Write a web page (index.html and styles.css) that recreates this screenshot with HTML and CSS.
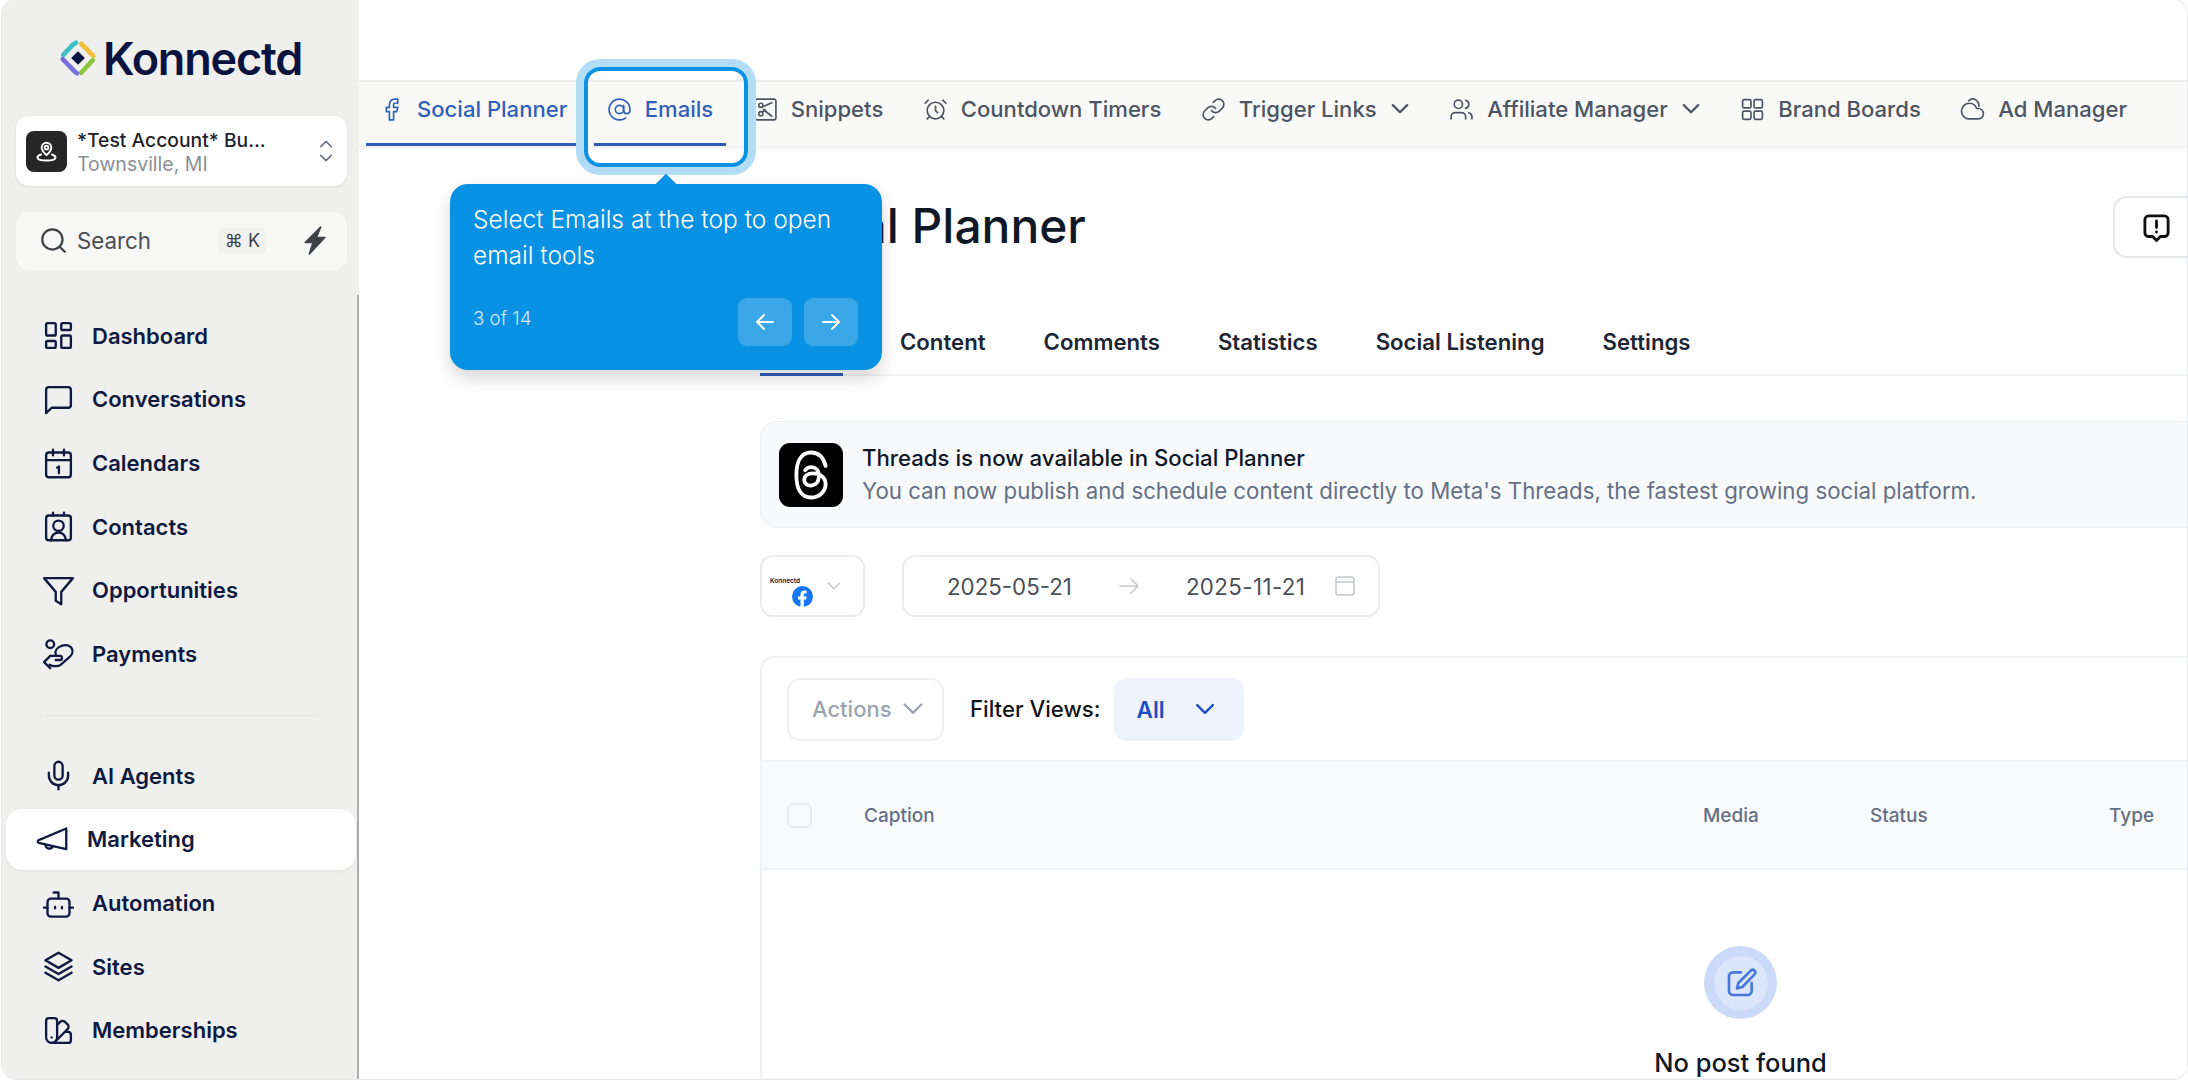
FILE: index.html
```html
<!DOCTYPE html>
<html lang="en">
<head>
    <meta charset="UTF-8">
    <title>Social Planner</title>
    <link rel="stylesheet" href="styles.css">
</head>
<body>
<div class="app">
    <aside class="sidebar">
        <div class="logo">
            <svg class="logo-mark" viewBox="0 0 36 36" fill="none" stroke-width="4.4" stroke-linecap="round" stroke-linejoin="round">
                <path d="M4 15 13 5.5 16 3.5" stroke="#3cc0c4"/>
                <path d="M21 4.5 32.5 16" stroke="#f3bd3f"/>
                <path d="M32 20 21 32" stroke="#8bc63f"/>
                <path d="M3.5 19 14.5 30.5 17 32.5" stroke="#7a6fd8"/>
                <path d="M18 11.5 24.5 18 18 24.5 11.5 18Z" fill="#0b1440" stroke="none"/>
            </svg>
            <span class="logo-text">Konnectd</span>
        </div>

        <div class="account">
            <div class="account-pic">
                <svg viewBox="0 0 24 24" fill="none" stroke="#fff" stroke-width="1.6" stroke-linecap="round" stroke-linejoin="round">
                    <path d="M12 15c-2.5-2.4-4-4.2-4-6.2a4 4 0 0 1 8 0c0 2-1.500 3.800-4 6.200Z"/>
                    <circle cx="12" cy="8.800" r="1.500"/>
                    <path d="M7.500 14.500C5.500 15.200 4.500 16 4.500 17c0 1.600 3.400 2.500 7.500 2.500s7.500-.9 7.500-2.500c0-1-1-1.800-3-2.500"/>
                </svg>
            </div>
            <div class="account-text">
                <div class="account-name">*Test Account* Bu...</div>
                <div class="account-place">Townsville, MI</div>
            </div>
            <svg class="updown" viewBox="0 0 16 28" fill="none" stroke="#667085" stroke-width="1.700" stroke-linecap="round" stroke-linejoin="round">
                <path d="M2 9l6-6 6 6"/>
                <path d="M2 19l6 6 6-6"/>
            </svg>
        </div>

        <div class="search">
            <svg class="search-icon" viewBox="0 0 24 24" fill="none" stroke="#3f4247" stroke-width="2" stroke-linecap="round">
                <circle cx="11" cy="11" r="9"/>
                <path d="M18 18l4 4"/>
            </svg>
            <span class="search-label">Search</span>
            <span class="kbd">⌘ K</span>
            <svg class="bolt" viewBox="0 0 24 30" fill="#3f4247" stroke="#3f4247" stroke-width="1.500" stroke-linejoin="round"><path d="M18 2 3 17h7.500L7 28l15-16h-8z"/></svg>
        </div>

        <nav class="nav">
            <a class="nav-item">
                <svg class="nav-icon" viewBox="0 0 24 24"><rect x="3" y="3" width="7" height="9" rx="1"/><rect x="14" y="3" width="7" height="5" rx="1"/><rect x="14" y="12" width="7" height="9" rx="1"/><rect x="3" y="16" width="7" height="5" rx="1"/></svg>
                Dashboard
            </a>
            <a class="nav-item">
                <svg class="nav-icon" viewBox="0 0 24 24"><path d="M3 22V5a2 2 0 0 1 2-2h14a2 2 0 0 1 2 2v11a2 2 0 0 1-2 2H7z"/></svg>
                Conversations
            </a>
            <a class="nav-item">
                <svg class="nav-icon" viewBox="0 0 24 24"><rect x="3" y="4" width="18" height="18" rx="2"/><path d="M3 9.500h18M8 2v4M16 2v4M11 15l1.300-.8V19"/></svg>
                Calendars
            </a>
            <a class="nav-item">
                <svg class="nav-icon" viewBox="0 0 24 24"><rect x="3" y="4" width="18" height="18" rx="2"/><path d="M8 2v2M16 2v2M6.500 22c.5-3.500 2.700-5.500 5.500-5.500s5 2 5.500 5.500"/><circle cx="12" cy="11.500" r="3.800"/></svg>
                Contacts
            </a>
            <a class="nav-item">
                <svg class="nav-icon" viewBox="0 0 24 24"><path d="M1.500 3h21l-8.500 10v9l-4-2.500V13z"/></svg>
                Opportunities
            </a>
            <a class="nav-item">
                <svg class="nav-icon" viewBox="0 0 24 24"><circle cx="6" cy="4.500" r="2.800"/><path d="M10 12c-.8-2.500.8-5 4-6.200 3-1 6-.5 7.500 1.500 1.500 2.200.5 5-2 7l-6 5.200c-1 .8-2 1-3 1H8l-2.500-1"/><path d="M6 13l-4.500 4.500L6 22"/><path d="M6 13h7a1.500 1.500 0 0 1 0 3h-3"/></svg>
                Payments
            </a>
        </nav>

        <div class="nav-divider"></div>

        <nav class="nav">
            <a class="nav-item">
                <svg class="nav-icon" viewBox="0 0 24 24"><path d="M12 2a3 3 0 0 0-3 3v7a3 3 0 0 0 6 0V5a3 3 0 0 0-3-3Z"/><path d="M19 10v2a7 7 0 0 1-14 0v-2M12 19v3"/></svg>
                AI Agents
            </a>
            <a class="nav-item nav-item-active">
                <svg class="nav-icon" viewBox="0 0 24 24"><path d="M22 4v15L2 14.500c-1-.3-1-1.700 0-2z"/><path d="M7 16c0 2.500 3 3.500 5 1.500"/></svg>
                Marketing
            </a>
            <a class="nav-item">
                <svg class="nav-icon" viewBox="0 0 24 24"><rect x="4" y="8.500" width="16" height="13" rx="2.500"/><path d="M12 8.500V4H8.500M1.500 15H4M20 15h2.500M9.500 14.500v1M14.500 14.500v1"/></svg>
                Automation
            </a>
            <a class="nav-item">
                <svg class="nav-icon" viewBox="0 0 24 24"><path d="M12 2 2.500 7.500 12 13l9.500-5.500z"/><path d="M2.500 12 12 17.500 21.500 12"/><path d="M2.500 16.500 12 22l9.500-5.500"/></svg>
                Sites
            </a>
            <a class="nav-item">
                <svg class="nav-icon" viewBox="0 0 24 24"><path d="M11 17a4 4 0 0 1-8 0V5a2 2 0 0 1 2-2h4a2 2 0 0 1 2 2Z"/><path d="M16.700 13H19a2 2 0 0 1 2 2v4a2 2 0 0 1-2 2H7"/><path d="M7 17h.01"/><path d="m11 8 2.300-2.300a2.400 2.400 0 0 1 3.404.004L18.600 7.600a2.400 2.400 0 0 1 .026 3.434L9.900 19.800"/></svg>
                Memberships
            </a>
            <a class="nav-item">
                <svg class="nav-icon" viewBox="0 0 24 24"><rect x="4" y="3" width="16" height="18" rx="2"/></svg>
            </a>
        </nav>
    </aside>

    <main class="main">
        <div class="topbar"></div>

        <div class="tabs">
            <a class="tab tab-active">
                <svg class="tab-icon" viewBox="0 0 24 24"><path d="M18 2h-3a5 5 0 0 0-5 5v3H7v4h3v8h4v-8h3l1-4h-4V7a1 1 0 0 1 1-1h3z"/></svg>
                Social Planner
            </a>
            <a class="tab tab-active">
                <svg class="tab-icon" viewBox="0 0 24 24"><circle cx="12" cy="12" r="4"/><path d="M16 8v5a3 3 0 0 0 6 0v-1a10 10 0 1 0-4 8"/></svg>
                Emails
            </a>
            <a class="tab">
                <svg class="tab-icon" viewBox="0 0 24 24"><rect x="2" y="2" width="20" height="20" rx="2"/><circle cx="7.500" cy="8" r="2"/><circle cx="7.500" cy="16" r="2"/><path d="M9 9.500l9-4M10 12l8 6.500M9 14.500l3-2"/></svg>
                Snippets
            </a>
            <a class="tab">
                <svg class="tab-icon" viewBox="0 0 24 24"><circle cx="12" cy="13" r="8"/><path d="M12 9v4l2 2M5 3 2 6M22 6l-3-3M6.380 18.700 4 21M17.640 18.670 20 21"/></svg>
                Countdown Timers
            </a>
            <a class="tab">
                <svg class="tab-icon" viewBox="0 0 24 24"><path d="M10 13a5 5 0 0 0 7.540.54l3-3a5 5 0 0 0-7.070-7.070l-1.720 1.710"/><path d="M14 11a5 5 0 0 0-7.540-.54l-3 3a5 5 0 0 0 7.070 7.070l1.710-1.710"/></svg>
                Trigger Links
                <svg class="tab-caret" viewBox="0 0 18 18"><path d="M2.500 5.500 9 12l6.500-6.500"/></svg>
            </a>
            <a class="tab">
                <svg class="tab-icon" viewBox="0 0 24 24"><path d="M16 21v-2a4 4 0 0 0-4-4H6a4 4 0 0 0-4 4v2"/><circle cx="9" cy="7" r="4"/><path d="M22 21v-2a4 4 0 0 0-3-3.870M16 3.130a4 4 0 0 1 0 7.750"/></svg>
                Affiliate Manager
                <svg class="tab-caret" viewBox="0 0 18 18"><path d="M2.500 5.500 9 12l6.500-6.500"/></svg>
            </a>
            <a class="tab">
                <svg class="tab-icon" viewBox="0 0 24 24"><rect x="2.500" y="2.500" width="8" height="8" rx="1.500"/><rect x="13.500" y="2.500" width="8" height="8" rx="1.500"/><rect x="2.500" y="13.500" width="8" height="8" rx="1.500"/><rect x="13.500" y="13.500" width="8" height="8" rx="1.500"/></svg>
                Brand Boards
            </a>
            <a class="tab">
                <svg class="tab-icon" viewBox="0 0 24 24"><path d="M17.500 21H9a7.500 7.500 0 0 1-6-12c1.500-2 3.500-3 6-3a7.500 7.500 0 0 1 7 5h1.500a5 5 0 0 1 0 10Z"/><path d="M8.500 3.500c2-1.800 5-2 7-.5 2 1.500 3 3.800 2.500 6"/></svg>
                Ad Manager
            </a>
        </div>

        <div class="content">
            <div class="page-head">
                <h1 class="page-title">Social Planner</h1>
                <button class="feedback">
                    <svg viewBox="0 0 24 24" fill="none" stroke="#111" stroke-width="2.200" stroke-linecap="round" stroke-linejoin="round"><path d="M6 3h12a3 3 0 0 1 3 3v10a3 3 0 0 1-3 3h-3l-3 3-3-3H6a3 3 0 0 1-3-3V6a3 3 0 0 1 3-3Z"/><path d="M12 7v5M12 15.500v.01"/></svg>
                </button>
            </div>

            <div class="subtabs">
                <a class="subtab subtab-active">Planner</a>
                <a class="subtab">Content</a>
                <a class="subtab">Comments</a>
                <a class="subtab">Statistics</a>
                <a class="subtab">Social Listening</a>
                <a class="subtab">Settings</a>
            </div>

            <div class="banner">
                <div class="threads-pic">
                    <svg viewBox="0 0 24 24" fill="none" stroke="#fff" stroke-width="1.700" stroke-linecap="round"><path d="M18.500 8C17.500 4 15 2 12 2 7.500 2 5.500 6 5.500 12c0 6 2 10 6.500 10 4 0 6.500-3 6.500-6 0-3-2.500-4.700-5.700-4.700-2.300 0-3.800 1.200-3.800 2.900 0 1.600 1.400 2.600 3 2.500 2.300-.2 3.500-1.900 3.500-4.200 0-2.700-1.500-4-3.300-4-1.200 0-2.200.5-2.800 1.400"/></svg>
                </div>
                <div class="banner-body">
                    <div class="banner-title">Threads is now available in Social Planner</div>
                    <div class="banner-text">You can now publish and schedule content directly to Meta's Threads, the fastest growing social platform.</div>
                </div>
            </div>

            <div class="filters">
                <div class="page-picker">
                    <div class="page-logo">
                        <span class="page-logo-name">Konnectd</span>
                        <svg class="fb-badge" viewBox="0 0 20 20"><circle cx="10" cy="10" r="10" fill="#1877f2"/><path d="M13.500 12.800l.4-2.800h-2.700V8.300c0-.8.4-1.500 1.600-1.500H14V4.500s-1.100-.2-2.200-.2c-2.200 0-3.700 1.300-3.700 3.800V10H5.700v2.800h2.400V20h3.100v-7.200z" fill="#fff"/></svg>
                    </div>
                    <svg class="caret-soft" viewBox="0 0 18 18"><path d="M2.500 5.500 9 12l6.500-6.500"/></svg>
                </div>
                <div class="range">
                    <span class="range-from">2025-05-21</span>
                    <svg class="range-arrow" viewBox="0 0 20 20"><path d="M1 10h18M12 3l7 7-7 7"/></svg>
                    <span class="range-to">2025-11-21</span>
                    <svg class="range-cal" viewBox="0 0 20 20"><rect x="1" y="1" width="18" height="18" rx="2.500"/><path d="M1 6h18"/></svg>
                </div>
            </div>

            <div class="card">
                <div class="toolbar">
                    <button class="btn-actions">Actions
                        <svg class="caret-grey" viewBox="0 0 18 18"><path d="M1.500 5 9 12.500 16.500 5"/></svg>
                    </button>
                    <span class="filter-label">Filter Views:</span>
                    <button class="btn-view">All
                        <svg class="caret-blue" viewBox="0 0 18 18"><path d="M2 5.500 9 12.500l7-7"/></svg>
                    </button>
                </div>
                <div class="thead">
                    <span class="checkbox"></span>
                    <span class="th th-caption">Caption</span>
                    <span class="th th-media">Media</span>
                    <span class="th th-status">Status</span>
                    <span class="th">Type</span>
                </div>
                <div class="empty">
                    <div class="empty-ring">
                        <div class="empty-core">
                            <svg viewBox="0 0 24 24" fill="none" stroke="#4a78d8" stroke-width="2" stroke-linecap="round" stroke-linejoin="round"><path d="M12 4H6a3 3 0 0 0-3 3v11a3 3 0 0 0 3 3h11a3 3 0 0 0 3-3v-6"/><path d="M19.500 2.500a2 2 0 0 1 2.800 2.800L13 15l-4 1 1-4z"/></svg>
                        </div>
                    </div>
                    <div class="empty-text">No post found</div>
                </div>
            </div>
        </div>
    </main>

    <!-- guided tour overlay -->
    <div class="spotlight"></div>
    <div class="tour">
        <span class="tour-tip"></span>
        <p class="tour-text">Select Emails at the top to open email tools</p>
        <div class="tour-foot">
            <span class="tour-count">3 of 14</span>
            <div class="tour-btns">
                <button class="tour-btn"><svg viewBox="0 0 24 24"><path d="M20 12H4M11 5l-7 7 7 7"/></svg></button>
                <button class="tour-btn"><svg viewBox="0 0 24 24"><path d="M4 12h16M13 5l7 7-7 7"/></svg></button>
            </div>
        </div>
    </div>
</div>
</body>
</html>
```

FILE: styles.css
```css
* {
    box-sizing: border-box;
}

body {
    margin: 0;
    padding: 0 1px 1px 2px;
    height: 1080px;
    overflow: hidden;
    background: #fff;
    font-family: Inter, "Liberation Sans", sans-serif;
}

button {
    font-family: inherit;
}

.app {
    position: relative;
    display: flex;
    height: 1079px;
    overflow: hidden;
    border-radius: 14px;
    box-shadow: 0 0 0 1px #e7e8eb;
}

/* sidebar */
.sidebar {
    position: relative;
    flex: 0 0 357px;
    background: #efefee;
    overflow: hidden;
}

.sidebar::after {
    content: "";
    position: absolute;
    top: 295px;
    bottom: 0;
    right: 0;
    width: 2px;
    background: #adadad;
}

.logo {
    display: flex;
    align-items: center;
    gap: 6px;
    height: 116px;
    padding: 0 0 0 57px;
}

.logo-mark {
    width: 38px;
    height: 38px;
}

.logo-text {
    font-size: 45px;
    font-weight: 600;
    letter-spacing: -1.200px;
    color: #0b1440;
}

.account {
    display: flex;
    align-items: center;
    height: 70px;
    margin: 0 12px 0 14px;
    padding: 0 14px 0 10px;
    background: #fff;
    border-radius: 13px;
    box-shadow: 0 1px 3px rgba(0, 0, 0, 0.08);
}

.account-pic {
    flex: 0 0 41px;
    height: 41px;
    padding: 6px;
    margin-right: 10px;
    background: #262626;
    border-radius: 8px;
}

.account-text {
    flex: 1;
    padding-top: 2px;
}

.account-name {
    font-size: 19.300px;
    font-weight: 500;
    line-height: 24px;
    color: #1f2328;
}

.account-place {
    font-size: 19.500px;
    line-height: 24px;
    color: #8b8f96;
}

.updown {
    width: 14px;
    height: 26px;
}

.search {
    display: flex;
    align-items: center;
    height: 58px;
    margin: 26px 12px 34px 14px;
    padding: 0 20px 2px 24px;
    background: #f7f7f6;
    border-radius: 13px;
}

.search-icon {
    width: 27px;
    height: 27px;
}

.search-label {
    flex: 1;
    margin-left: 10px;
    font-size: 22.300px;
    color: #4a4d52;
}

.kbd {
    padding: 2px 6px;
    background: #f1f1f0;
    border-radius: 4px;
    font-size: 18px;
    color: #3f4247;
}

.bolt {
    width: 25px;
    height: 31px;
    margin-left: 36px;
}

.nav-item {
    display: flex;
    align-items: center;
    gap: 17px;
    height: 63.670px;
    padding-left: 40px;
    font-size: 22px;
    font-weight: 600;
    color: #101a40;
}

.nav-icon {
    width: 33px;
    height: 33px;
    fill: none;
    stroke: #101a40;
    stroke-width: 1.700;
    stroke-linecap: round;
    stroke-linejoin: round;
}

.nav-item-active {
    gap: 18px;
    height: 61px;
    margin: 1px 3px 1.670px 4px;
    padding-left: 30px;
    background: #fff;
    border-radius: 16px;
    box-shadow: 0 1px 3px rgba(0, 0, 0, 0.06);
}

.nav-divider {
    height: 1px;
    margin: 29px 40px 28px 44px;
    background: #e6e6e5;
}

/* top tabs */
.main {
    flex: 1;
    min-width: 0;
    overflow: hidden;
    background: #fff;
}

.topbar {
    height: 80px;
}

.tabs {
    position: relative;
    display: flex;
    gap: 13.500px;
    height: 66px;
    padding-left: 7px;
    background: #f9f9f8;
    border-top: 2px solid #ececec;
    box-shadow: 0 2px 4px rgba(0, 0, 0, 0.08);
}

.tab {
    display: flex;
    align-items: center;
    gap: 13px;
    padding: 0 13px 7px;
    border-bottom: 3px solid transparent;
    font-size: 22.080px;
    font-weight: 500;
    color: #4d5562;
    white-space: nowrap;
}

.tab-icon {
    width: 25px;
    height: 25px;
    fill: none;
    stroke: currentColor;
    stroke-width: 1.600;
    stroke-linecap: round;
    stroke-linejoin: round;
}

.tab-caret {
    width: 20px;
    height: 20px;
    fill: none;
    stroke: currentColor;
    stroke-width: 2;
    stroke-linecap: round;
    stroke-linejoin: round;
}

.tab-active {
    color: #3160b8;
    border-bottom-color: #2f5ab5;
}

/* page content */
.content {
    width: 2362px;
    padding: 50px 0 0 401px;
}

.page-head {
    display: flex;
    justify-content: space-between;
    align-items: center;
    width: 1499px;
    height: 62px;
}

.page-title {
    margin: 0 0 2px;
    font-size: 47.900px;
    font-weight: 500;
    color: #101828;
}

.feedback {
    width: 146px;
    height: 62px;
    padding: 0 0 0 26px;
    text-align: left;
    background: #fff;
    border: 2px solid #e6e7ea;
    border-radius: 14px;
}

.feedback svg {
    display: block;
    width: 31px;
    height: 31px;
}

.subtabs {
    display: flex;
    height: 66px;
    margin-top: 52px;
    border-bottom: 2px solid #f1f2f4;
}

.subtab {
    display: flex;
    align-items: center;
    height: 66px;
    padding-bottom: 3px;
    margin-right: 58px;
    font-size: 22.200px;
    font-weight: 600;
    color: #1d2633;
    white-space: nowrap;
}

.subtab-active {
    width: 83px;
    border-bottom: 3px solid #2f5ab5;
    overflow: hidden;
    margin-right: 57px;
}

.banner {
    display: flex;
    align-items: center;
    gap: 19px;
    height: 107px;
    margin-top: 45px;
    padding: 0 0 0 18px;
    background: #f8f9fb;
    border: 1px solid #f0f1f4;
    border-radius: 16px;
}

.threads-pic {
    flex: 0 0 64px;
    height: 64px;
    padding: 5px;
    background: #000;
    border-radius: 11px;
}

.banner-body {
    margin-top: -2px;
}

.banner-title {
    font-size: 22.200px;
    font-weight: 500;
    color: #101828;
}

.banner-text {
    margin-top: 6px;
    font-size: 22.250px;
    color: #667085;
    white-space: nowrap;
}

.filters {
    display: flex;
    gap: 39px;
    height: 62px;
    margin-top: 27px;
}

.page-picker,
.range {
    display: flex;
    align-items: center;
    background: #fff;
    border: 2px solid #eaebee;
    border-radius: 13px;
}

.page-picker {
    width: 105px;
    padding-left: 8px;
}

.page-logo {
    display: flex;
    flex-direction: column;
    align-items: flex-end;
    width: 46px;
    margin-top: 11px;
}

.page-logo-name {
    align-self: flex-start;
    font-size: 6.500px;
    font-weight: 600;
    color: #0b1440;
}

.fb-badge {
    width: 21px;
    height: 21px;
    margin-top: 1px;
    margin-right: 3px;
}

.caret-soft {
    width: 16px;
    height: 16px;
    margin-left: 10px;
    fill: none;
    stroke: #c4c7cc;
    stroke-width: 1.600;
    stroke-linecap: round;
    stroke-linejoin: round;
}

.range {
    width: 478px;
    margin-left: -2px;
    padding-left: 43px;
    font-size: 22.300px;
    color: #4b4f57;
}

.range-arrow {
    width: 20px;
    height: 20px;
    margin: 0 47px;
    fill: none;
    stroke: #c4c7cc;
    stroke-width: 1.500;
    stroke-linecap: round;
    stroke-linejoin: round;
}

.range-to {
    letter-spacing: 0.400px;
}

.range-cal {
    width: 20px;
    height: 20px;
    margin-left: 30px;
    fill: none;
    stroke: #c4c7cc;
    stroke-width: 1.500;
}

.card {
    margin-top: 39px;
    background: #fff;
    border: 2px solid #f1f2f4;
    border-radius: 14px 14px 0 0;
}

.toolbar {
    display: flex;
    align-items: center;
    height: 102px;
    padding-left: 25px;
}

.btn-actions {
    display: flex;
    align-items: center;
    gap: 11px;
    width: 157px;
    height: 63px;
    padding: 0 0 0 23px;
    background: #fff;
    border: 2px solid #eef0f2;
    border-radius: 13px;
    font-size: 22px;
    font-weight: 500;
    color: #9ca3af;
}

.caret-grey {
    width: 20px;
    height: 20px;
    fill: none;
    stroke: #9ca3af;
    stroke-width: 2;
    stroke-linecap: round;
    stroke-linejoin: round;
}

.filter-label {
    margin: 0 13px 2px 26px;
    font-size: 22.200px;
    font-weight: 500;
    color: #111418;
}

.btn-view {
    display: flex;
    align-items: center;
    gap: 30px;
    width: 130px;
    height: 63px;
    padding: 0 0 0 23px;
    background: #eef3fd;
    border: 0;
    border-radius: 13px;
    font-size: 22.500px;
    font-weight: 600;
    color: #1f4fc0;
}

.caret-blue {
    width: 20px;
    height: 20px;
    fill: none;
    stroke: #1f4fc0;
    stroke-width: 2.200;
    stroke-linecap: round;
    stroke-linejoin: round;
}

.thead {
    display: flex;
    align-items: center;
    height: 110px;
    padding-left: 25px;
    background: #f9fafb;
    border-top: 2px solid #f1f2f4;
    border-bottom: 2px solid #f1f2f4;
}

.checkbox {
    width: 25px;
    height: 25px;
    margin-right: 52px;
    border: 2px solid #e8eaed;
    border-radius: 6px;
}

.th {
    font-size: 19px;
    font-weight: 500;
    color: #667085;
}

.th-caption {
    width: 839px;
}

.th-media {
    width: 167px;
}

.th-status {
    width: 239px;
}

.empty {
    display: flex;
    flex-direction: column;
    align-items: center;
    padding-top: 76px;
}

.empty-ring {
    display: flex;
    align-items: center;
    justify-content: center;
    width: 73px;
    height: 73px;
    background: #ccdaf9;
    border-radius: 50%;
}

.empty-core {
    width: 54px;
    height: 54px;
    padding: 11px;
    background: #dbe5fb;
    border-radius: 50%;
}

.empty-text {
    margin-top: 28px;
    font-size: 25.500px;
    font-weight: 500;
    color: #101828;
}

/* tour */
.spotlight {
    position: absolute;
    left: 582px;
    top: 67px;
    width: 164px;
    height: 100px;
    border: 4px solid #0a93e5;
    border-radius: 16px;
    box-shadow: 0 0 0 8px #b3dcf6;
}

.tour {
    position: absolute;
    left: 448px;
    top: 184px;
    width: 432px;
    height: 186px;
    padding: 17px 24px 0 23px;
    background: #0992e3;
    border-radius: 18px;
    box-shadow: 0 8px 18px rgba(0, 0, 0, 0.16);
    color: #fff;
}

.tour-tip {
    position: absolute;
    left: 208px;
    top: -7px;
    width: 16px;
    height: 16px;
    background: #0992e3;
    transform: rotate(45deg);
}

.tour-text {
    margin: 0;
    font-size: 24.500px;
    font-weight: 300;
    line-height: 36px;
}

.tour-foot {
    display: flex;
    justify-content: space-between;
    align-items: flex-start;
    margin-top: 25px;
}

.tour-count {
    margin-top: 9px;
    font-size: 18.700px;
    font-weight: 300;
    opacity: 0.8;
}

.tour-btns {
    display: flex;
    gap: 12px;
}

.tour-btn {
    display: flex;
    align-items: center;
    justify-content: center;
    width: 54px;
    height: 48px;
    padding: 0;
    background: rgba(255, 255, 255, 0.2);
    border: 0;
    border-radius: 9px;
}

.tour-btn svg {
    width: 24px;
    height: 24px;
    fill: none;
    stroke: #fff;
    stroke-width: 2;
    stroke-linecap: round;
    stroke-linejoin: round;
}
```
